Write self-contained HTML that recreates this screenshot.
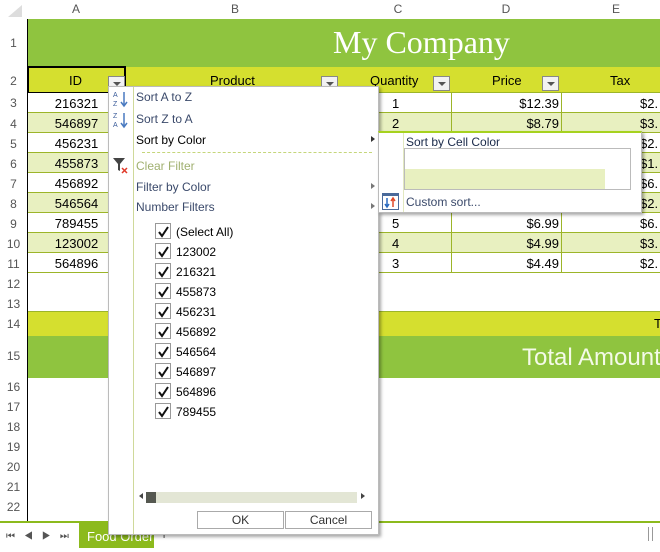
<!DOCTYPE html><html><head><style>
*{margin:0;padding:0;box-sizing:border-box}
body{width:660px;height:552px;overflow:hidden;background:#fff;font-family:"Liberation Sans",sans-serif;position:relative}
.a{position:absolute}
.rh{position:absolute;left:0;width:27px;text-align:center;font-size:12px;color:#555}
.ch{position:absolute;top:0;height:19px;line-height:19px;text-align:center;font-size:12px;color:#555}
.cell{position:absolute;font-size:13px;line-height:20px;color:#000}
.m{position:absolute;left:136px;font-size:12px;color:#3b4a6b}
.cb{position:absolute;left:155px;width:16px;height:16px;border:1px solid #999;background:#fff}
.cb svg{position:absolute;left:1px;top:1px}
.cl{position:absolute;left:176px;font-size:12px;color:#000}
.dd{position:absolute;width:17px;height:15px;border:1px solid #888;background:#f2f2f2}
.dd:after{content:"";position:absolute;left:4px;top:5px;border-left:4px solid transparent;border-right:4px solid transparent;border-top:4px solid #555}
</style></head><body>
<div class="a" style="left:8px;top:5px;width:0;height:0;border-left:14px solid transparent;border-bottom:12px solid #ddd"></div>
<div class="ch" style="left:27px;width:98px">A</div>
<div class="ch" style="left:125px;width:220px">B</div>
<div class="ch" style="left:345px;width:106px">C</div>
<div class="ch" style="left:451px;width:110px">D</div>
<div class="ch" style="left:561px;width:110px">E</div>
<div class="a" style="left:27px;top:19px;width:1px;height:503px;background:#000"></div>
<div class="a" style="left:28px;top:19px;width:632px;height:48px;background:#8fc43f"></div>
<div class="a" style="left:333px;top:24px;font-family:'Liberation Serif',serif;font-size:32px;color:#fff">My Company</div>
<div class="a" style="left:28px;top:67px;width:632px;height:26px;background:#d5df2f;border-bottom:1px solid #9cb529"></div>
<div class="a" style="left:27px;top:66px;width:99px;height:28px;border:2px solid #000"></div>
<div class="cell" style="left:69px;top:71px">ID</div>
<div class="cell" style="left:210px;top:71px">Product</div>
<div class="cell" style="left:370px;top:71px">Quantity</div>
<div class="cell" style="left:492px;top:71px">Price</div>
<div class="cell" style="left:610px;top:71px">Tax</div>
<div class="dd" style="left:108px;top:76px"></div>
<div class="dd" style="left:321px;top:76px"></div>
<div class="dd" style="left:433px;top:76px"></div>
<div class="dd" style="left:542px;top:76px"></div>
<div class="a" style="left:28px;top:93px;width:632px;height:180px;background:
repeating-linear-gradient(#fff 0,#fff 19px,#9cb529 19px,#9cb529 20px,#e8f0c0 20px,#e8f0c0 39px,#9cb529 39px,#9cb529 40px)"></div>
<div class="a" style="left:451px;top:93px;width:1px;height:180px;background:#9cb529"></div>
<div class="a" style="left:561px;top:93px;width:1px;height:180px;background:#9cb529"></div>
<div class="a" style="left:125px;top:93px;width:1px;height:180px;background:#9cb529"></div>
<div class="cell" style="left:28px;width:97px;text-align:center;top:94px;line-height:20px">216321<br>546897<br>456231<br>455873<br>456892<br>546564<br>789455<br>123002<br>564896</div>
<div class="cell" style="left:392px;top:94px;line-height:20px">1<br>2<br><br><br><br><br>5<br>4<br>3</div>
<div class="cell" style="left:451px;top:94px;width:108px;text-align:right;line-height:20px">$12.39<br>$8.79<br><br><br><br><br>$6.99<br>$4.99<br>$4.49</div>
<div class="cell" style="left:640px;top:94px;line-height:20px">$2.<br>$3.<br>$2.<br>$1.<br>$6.<br>$2.<br>$6.<br>$3.<br>$2.</div>
<div class="a" style="left:28px;top:311px;width:632px;height:25px;background:#d5df2f;border-top:1px solid #9cb529"></div>
<div class="cell" style="left:654px;top:314px">T</div>
<div class="a" style="left:28px;top:336px;width:632px;height:42px;background:#8fc43f"></div>
<div class="a" style="left:522px;top:344px;font-size:24px;color:#f4fae8;white-space:nowrap">Total Amount</div>
<div class="rh" style="top:36px">1</div><div class="rh" style="top:74px">2</div>
<div class="rh" style="top:96px">3</div><div class="rh" style="top:117px">4</div><div class="rh" style="top:137px">5</div><div class="rh" style="top:157px">6</div><div class="rh" style="top:177px">7</div><div class="rh" style="top:197px">8</div><div class="rh" style="top:217px">9</div><div class="rh" style="top:237px">10</div><div class="rh" style="top:257px">11</div><div class="rh" style="top:277px">12</div><div class="rh" style="top:297px">13</div><div class="rh" style="top:317px">14</div><div class="rh" style="top:349px">15</div><div class="rh" style="top:380px">16</div><div class="rh" style="top:400px">17</div><div class="rh" style="top:420px">18</div><div class="rh" style="top:440px">19</div><div class="rh" style="top:460px">20</div><div class="rh" style="top:480px">21</div><div class="rh" style="top:500px">22</div>
<div class="a" style="left:0;top:521px;width:660px;height:2px;background:#8cba1d"></div>
<div class="a" style="left:6px;top:531px;font-size:10px;color:#555;letter-spacing:9px">⏮◀▶⏭</div>
<div class="a" style="left:79px;top:523px;width:75px;height:25px;background:#8cba1d;color:#fff;font-size:13px;line-height:27px;padding-left:8px">Food Order</div>
<div class="a" style="left:160px;top:526px;font-size:14px;color:#555">+</div>
<div class="a" style="left:648px;top:527px;width:1px;height:14px;background:#999"></div><div class="a" style="left:652px;top:527px;width:1px;height:14px;background:#999"></div>
<div class="a" style="left:108px;top:86px;width:271px;height:449px;background:#fff;border:1px solid #bbb;box-shadow:2px 2px 3px rgba(0,0,0,.35)"></div>
<div class="a" style="left:133px;top:87px;width:1px;height:447px;background:#cfd99a"></div>
<svg class="a" style="left:112px;top:89px" width="20" height="20"><text x="1" y="8" font-size="7" fill="#3b5c9a" font-family="Liberation Sans">A</text><text x="1" y="17" font-size="7" fill="#3b5c9a" font-family="Liberation Sans">Z</text><path d="M12 3V16M9 13l3 4 3-4" stroke="#4a7ac0" fill="none" stroke-width="1.5"/></svg>
<svg class="a" style="left:112px;top:110px" width="20" height="20"><text x="1" y="8" font-size="7" fill="#3b5c9a" font-family="Liberation Sans">Z</text><text x="1" y="17" font-size="7" fill="#3b5c9a" font-family="Liberation Sans">A</text><path d="M12 3V16M9 13l3 4 3-4" stroke="#4a7ac0" fill="none" stroke-width="1.5"/></svg>
<div class="m" style="top:90px">Sort A to Z</div>
<div class="m" style="top:112px">Sort Z to A</div>
<div class="m" style="top:133px;color:#000">Sort by Color</div>
<div class="a" style="left:371px;top:136px;border-left:4px solid #333;border-top:3px solid transparent;border-bottom:3px solid transparent"></div>
<div class="a" style="left:142px;top:152px;width:230px;border-top:1px dashed #c5d67a"></div>
<svg class="a" style="left:112px;top:157px" width="18" height="18"><path d="M1 1H13L8 7V14L6 13V7Z" fill="#444"/><path d="M10 11l5 5M15 11l-5 5" stroke="#e03a2a" stroke-width="1.5"/></svg>
<div class="m" style="top:159px;color:#a0b070">Clear Filter</div>
<div class="m" style="top:180px">Filter by Color</div>
<div class="a" style="left:371px;top:183px;border-left:4px solid #777;border-top:3px solid transparent;border-bottom:3px solid transparent"></div>
<div class="m" style="top:200px">Number Filters</div>
<div class="a" style="left:371px;top:203px;border-left:4px solid #777;border-top:3px solid transparent;border-bottom:3px solid transparent"></div>
<div class="cb" style="top:223px"><svg width="13" height="13"><path d="M2 7l3 4 6-9" stroke="#111" stroke-width="2" fill="none"/></svg></div><div class="cl" style="top:225px">(Select All)</div>
<div class="cb" style="top:243px"><svg width="13" height="13"><path d="M2 7l3 4 6-9" stroke="#111" stroke-width="2" fill="none"/></svg></div><div class="cl" style="top:245px">123002</div>
<div class="cb" style="top:263px"><svg width="13" height="13"><path d="M2 7l3 4 6-9" stroke="#111" stroke-width="2" fill="none"/></svg></div><div class="cl" style="top:265px">216321</div>
<div class="cb" style="top:283px"><svg width="13" height="13"><path d="M2 7l3 4 6-9" stroke="#111" stroke-width="2" fill="none"/></svg></div><div class="cl" style="top:285px">455873</div>
<div class="cb" style="top:303px"><svg width="13" height="13"><path d="M2 7l3 4 6-9" stroke="#111" stroke-width="2" fill="none"/></svg></div><div class="cl" style="top:305px">456231</div>
<div class="cb" style="top:323px"><svg width="13" height="13"><path d="M2 7l3 4 6-9" stroke="#111" stroke-width="2" fill="none"/></svg></div><div class="cl" style="top:325px">456892</div>
<div class="cb" style="top:343px"><svg width="13" height="13"><path d="M2 7l3 4 6-9" stroke="#111" stroke-width="2" fill="none"/></svg></div><div class="cl" style="top:345px">546564</div>
<div class="cb" style="top:363px"><svg width="13" height="13"><path d="M2 7l3 4 6-9" stroke="#111" stroke-width="2" fill="none"/></svg></div><div class="cl" style="top:365px">546897</div>
<div class="cb" style="top:383px"><svg width="13" height="13"><path d="M2 7l3 4 6-9" stroke="#111" stroke-width="2" fill="none"/></svg></div><div class="cl" style="top:385px">564896</div>
<div class="cb" style="top:403px"><svg width="13" height="13"><path d="M2 7l3 4 6-9" stroke="#111" stroke-width="2" fill="none"/></svg></div><div class="cl" style="top:405px">789455</div>
<div class="a" style="left:139px;top:493px;border-right:4px solid #444;border-top:3px solid transparent;border-bottom:3px solid transparent"></div>
<div class="a" style="left:146px;top:492px;width:211px;height:11px;background:#e3e6d5"></div>
<div class="a" style="left:146px;top:492px;width:10px;height:11px;background:#555850"></div>
<div class="a" style="left:361px;top:493px;border-left:4px solid #444;border-top:3px solid transparent;border-bottom:3px solid transparent"></div>
<div class="a" style="left:197px;top:511px;width:87px;height:18px;border:1px solid #aaa;font-size:12px;text-align:center;line-height:16px;color:#333">OK</div>
<div class="a" style="left:285px;top:511px;width:87px;height:18px;border:1px solid #aaa;font-size:12px;text-align:center;line-height:16px;color:#333">Cancel</div>
<div class="a" style="left:378px;top:131px;width:264px;height:82px;background:#fff;border:1px solid #bbb;border-top:2px solid #a6d21e;box-shadow:2px 2px 3px rgba(0,0,0,.35)"></div>
<div class="a" style="left:403px;top:133px;width:1px;height:79px;background:#e2e8c0"></div>
<div class="a" style="left:406px;top:135px;font-size:12px;color:#1a2a4a">Sort by Cell Color</div>
<div class="a" style="left:404px;top:148px;width:227px;height:42px;border:1px solid #bbb;background:#fff"></div>
<div class="a" style="left:405px;top:169px;width:200px;height:20px;background:#e8f0c0"></div>
<svg class="a" style="left:382px;top:193px" width="17" height="17"><rect x="0.5" y="0.5" width="16" height="16" fill="#fff" stroke="#4a6a9a"/><rect x="0" y="0" width="17" height="3" fill="#4a6a9a"/><path d="M5 5V14M3 11l2 3 2-3" stroke="#2a6ac0" fill="none" stroke-width="1.5"/><path d="M11 14V5M9 8l2-3 2 3" stroke="#e04a2a" fill="none" stroke-width="1.5"/></svg>
<div class="a" style="left:406px;top:195px;font-size:12px;color:#3b4a6b">Custom sort...</div>
</body></html>
